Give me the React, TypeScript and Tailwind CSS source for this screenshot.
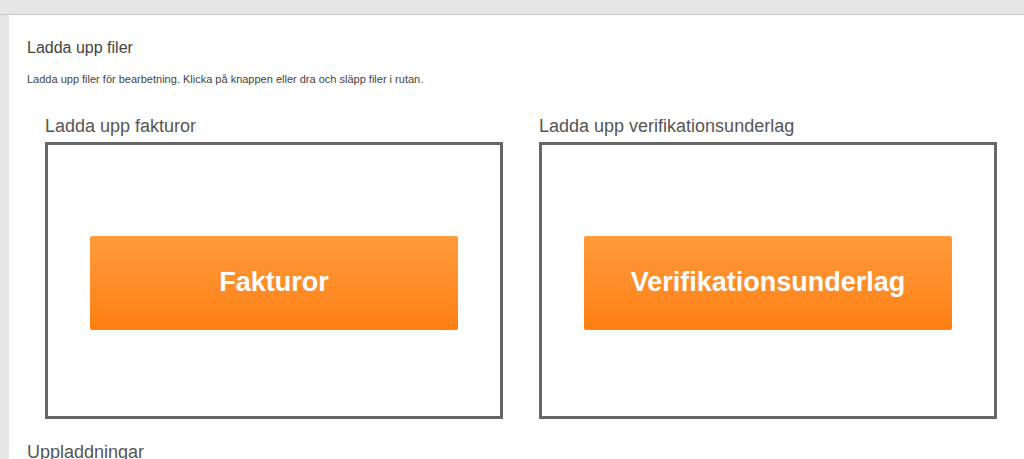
export default function App() {
  return (
    <div className="h-[459px] w-[1024px] overflow-hidden bg-[#e6e6e6] font-['Liberation_Sans',Arial,sans-serif]">
      <div className="h-[15px] border-b border-[#c9c9c9]" />
      <div className="ml-[9px] h-[444px] bg-white pl-[18px] pt-[23px]">
        <h1 className="text-[16px] leading-[20px] text-[#444]">Ladda upp filer</h1>
        <p className="mt-[14px] text-[11px] leading-[14px] text-[#444]">
          Ladda upp filer för bearbetning. Klicka på knappen eller dra och släpp filer i rutan.
        </p>
        <div className="ml-[18px] mt-[29px] flex gap-[36px]">
          {[
            { label: "Ladda upp fakturor", btn: "Fakturor" },
            { label: "Ladda upp verifikationsunderlag", btn: "Verifikationsunderlag" },
          ].map((s) => (
            <div key={s.btn} className="w-[458px]">
              <div className="text-[18px] leading-[22px] text-[#555]">{s.label}</div>
              <div className="mt-[5px] flex h-[277px] items-center justify-center border-[3px] border-[#666]">
                <button className="mt-[4px] flex h-[94px] w-[368px] items-center justify-center rounded-[2px] bg-gradient-to-b from-[#ff9b3a] to-[#ff7f0e] text-[27px] font-bold text-white">
                  {s.btn}
                </button>
              </div>
            </div>
          ))}
        </div>
        <h2 className="mt-[22px] text-[18px] leading-[22px] text-[#555]">Uppladdningar</h2>
      </div>
    </div>
  );
}
